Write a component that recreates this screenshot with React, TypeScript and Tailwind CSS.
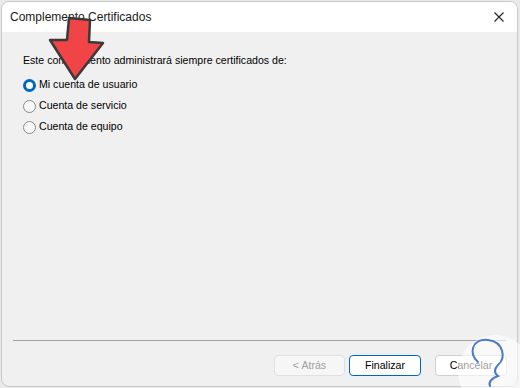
import React from "react";

function Radio({ checked, label }: { checked?: boolean; label: string }) {
  return (
    <label className="flex items-center h-[21px]">
      {checked ? (
        <span className="w-[13px] h-[13px] rounded-full border-[3px] border-[#0067c0] bg-white" />
      ) : (
        <span className="w-[13px] h-[13px] rounded-full border border-[#8a8a8a] bg-[#f7f7f7]" />
      )}
      <span className="ml-[3px]">{label}</span>
    </label>
  );
}

export default function App() {
  return (
    <div className="w-[520px] h-[388px] bg-[#e9e9e9] pt-[1px] pl-[1px] overflow-hidden relative" style={{ fontFamily: '"Liberation Sans", Arial, sans-serif' }}>
      <div className="w-[517px] h-[386px] rounded-lg border border-[#c8c8c8] bg-[#f0f0f0] flex flex-col overflow-hidden text-[10.6px] text-black">
        {/* title bar */}
        <div className="h-[30px] bg-white flex items-center justify-between pl-[8px] pr-[12px] shrink-0">
          <span className="text-[12px] text-[#1a1a1a]">Complemento Certificados</span>
          <svg width="10" height="10" viewBox="0 0 10 10" className="mr-[1px]">
            <path d="M0.5 0.5 L9.5 9.5 M9.5 0.5 L0.5 9.5" stroke="#222" strokeWidth="1.1" />
          </svg>
        </div>

        <div className="flex-1 px-[21px] pt-[21px]">
          <p className="mb-[6px]">Este complemento administrará siempre certificados de:</p>
          <div className="flex flex-col">
            <Radio checked label="Mi cuenta de usuario" />
            <Radio label="Cuenta de servicio" />
            <Radio label="Cuenta de equipo" />
          </div>
        </div>

        <div className="mx-[11px] border-t border-[#a0a0a0]" />
        <div className="h-[45px] flex items-start justify-end pt-[14px] pr-[10px] gap-[4px] shrink-0">
          <button className="w-[71px] h-[21px] rounded-[4px] border border-[#e0e0e0] bg-[#f6f6f6] text-[#a0a0a0]">&lt; Atrás</button>
          <button className="w-[72px] h-[21px] rounded-[4px] border border-[#0067c0] bg-white">Finalizar</button>
          <button className="ml-[10px] w-[72px] h-[21px] rounded-[4px] border border-[#d0d0d0] bg-white">Cancelar</button>
        </div>
      </div>

      {/* red arrow annotation */}
      <svg className="absolute left-[44px] top-[15px]" width="66" height="68" viewBox="0 0 66 68">
        <polygon points="25,3 46,5 45,27 59,28 31,64 6,25 23,25" fill="#f04447" stroke="#3a3a3a" strokeWidth="2.5" strokeLinejoin="round" />
      </svg>

      {/* watermark */}
      <svg className="absolute left-[440px] top-[320px]" width="80" height="68" viewBox="0 0 80 68">
        <circle cx="55" cy="52" r="37" fill="white" fillOpacity="0.6" />
        <path d="M38 42 C28 34 32 18 48 20 C64 22 66 38 58 45 C54 49 54 53 58 56 C52 58 48 62 50 66" fill="none" stroke="#4a7ac8" strokeWidth="2" strokeLinecap="round" />
      </svg>
    </div>
  );
}
